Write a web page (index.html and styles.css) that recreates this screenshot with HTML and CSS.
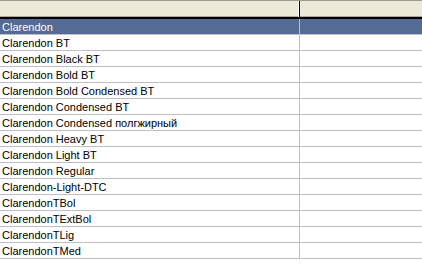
FILE: index.html
```html
<!DOCTYPE html>
<html>
<head>
<meta charset="utf-8">
<link rel="stylesheet" href="styles.css">
</head>
<body>
<div class="list">
  <div class="header">
    <div class="hcell first"></div>
    <div class="hcell"></div>
  </div>
  <div class="row selected"><div class="cell first">Clarendon</div><div class="cell"></div></div>
  <div class="row"><div class="cell first">Clarendon BT</div><div class="cell"></div></div>
  <div class="row"><div class="cell first">Clarendon Black BT</div><div class="cell"></div></div>
  <div class="row"><div class="cell first">Clarendon Bold BT</div><div class="cell"></div></div>
  <div class="row"><div class="cell first">Clarendon Bold Condensed BT</div><div class="cell"></div></div>
  <div class="row"><div class="cell first">Clarendon Condensed BT</div><div class="cell"></div></div>
  <div class="row"><div class="cell first">Clarendon Condensed полгжирный</div><div class="cell"></div></div>
  <div class="row"><div class="cell first">Clarendon Heavy BT</div><div class="cell"></div></div>
  <div class="row"><div class="cell first">Clarendon Light BT</div><div class="cell"></div></div>
  <div class="row"><div class="cell first">Clarendon Regular</div><div class="cell"></div></div>
  <div class="row"><div class="cell first">Clarendon-Light-DTC</div><div class="cell"></div></div>
  <div class="row"><div class="cell first">ClarendonTBol</div><div class="cell"></div></div>
  <div class="row"><div class="cell first">ClarendonTExtBol</div><div class="cell"></div></div>
  <div class="row"><div class="cell first">ClarendonTLig</div><div class="cell"></div></div>
  <div class="row"><div class="cell first">ClarendonTMed</div><div class="cell"></div></div>
</div>
</body>
</html>
```
FILE: styles.css
```css
html, body {
  margin: 0;
  padding: 0;
  background: #fff;
  width: 422px;
  height: 279px;
  overflow: hidden;
}
.list {
  font-family: "Liberation Sans", Arial, sans-serif;
  font-size: 11px;
  color: #000;
}
.header {
  display: flex;
  height: 16px;
  border-top: 1px solid #9a9a90;
  border-bottom: 2px solid #000;
  background: #ece9d8;
  box-shadow: inset 0 -1px 0 #aca899;
}
.hcell {
  flex: 1;
}
.hcell.first {
  flex: 0 0 299px;
  border-right: 1px solid #000;
  box-shadow: inset -1px 0 0 #fff;
}
.row {
  display: flex;
  height: 15px;
  border-bottom: 1px solid #c0c0c0;
}
.cell {
  flex: 1;
  line-height: 16px;
  padding-left: 2px;
  white-space: nowrap;
}
.cell.first {
  flex: 0 0 297px;
  border-right: 1px solid #c0c0c0;
}
.row.selected {
  background: #546c93;
  color: #fff;
}
```
